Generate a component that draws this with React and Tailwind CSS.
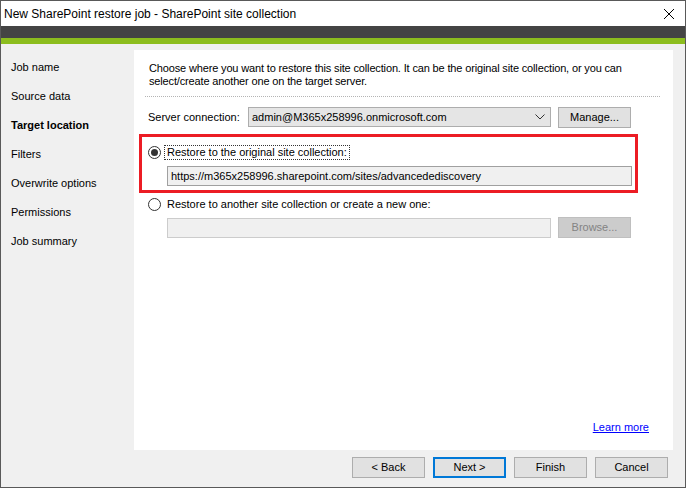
import React from 'react';

const navItems = ['Job name', 'Source data', 'Target location', 'Filters', 'Overwrite options', 'Permissions', 'Job summary'];

function Radio({ checked }) {
  return (
    <span className="w-[13px] h-[13px] rounded-full border border-[#333333] bg-white flex items-center justify-center shrink-0">
      {checked && <span className="w-[7px] h-[7px] rounded-full bg-[#333333]" />}
    </span>
  );
}

function Button({ children, primary, disabled, className = '' }) {
  return (
    <button
      className={
        'h-[21px] w-[73px] flex items-center justify-center ' +
        (primary
          ? 'border-2 border-[#0078d7] bg-[#e1e1e1] text-black '
          : disabled
          ? 'border border-[#bfbfbf] bg-[#cccccc] text-[#838383] '
          : 'border border-[#adadad] bg-[#e1e1e1] text-black ') +
        className
      }
    >
      {children}
    </button>
  );
}

export default function App() {
  return (
    <div
      className="w-[686px] h-[488px] border border-[#595959] flex flex-col bg-[#f0f0f0] text-[11px] text-black overflow-hidden"
      style={{ fontFamily: '"Liberation Sans", Arial, sans-serif' }}
    >
      {/* title bar */}
      <div className="h-[25px] bg-white flex items-center justify-between shrink-0">
        <span className="pl-[3px] text-[12px]">New SharePoint restore job - SharePoint site collection</span>
        <svg width="12" height="12" viewBox="0 0 12 12" className="mr-[10px]">
          <path d="M1 1 L11 11 M11 1 L1 11" stroke="#000" strokeWidth="1" fill="none" />
        </svg>
      </div>
      <div className="h-[12px] bg-[#444444] shrink-0" />
      <div className="h-[6px] bg-[#8cbd1e] shrink-0" />

      {/* body */}
      <div className="flex pt-[6px] pr-[12px] h-[406px]">
        <nav className="w-[133px] pt-[3px] pl-[10px]">
          {navItems.map((item) => (
            <div
              key={item}
              className={'h-[29px] flex items-center ' + (item === 'Target location' ? 'font-bold' : '')}
            >
              {item}
            </div>
          ))}
        </nav>

        <section className="flex-1 bg-white flex flex-col">
          <p className="pt-[12px] pl-[15px] w-[500px] leading-[13px] tracking-[-0.15px]">
            Choose where you want to restore this site collection. It can be the original site collection, or you can
            select/create another one on the target server.
          </p>
          <div className="mt-[8px] ml-[11px] mr-[13px] border-t border-dotted border-[#b4b4b4]" />

          <div className="mt-[10px] flex items-center h-[20px]">
            <span className="pl-[14px] w-[114px]">Server connection:</span>
            <div className="w-[303px] h-[20px] border border-[#adadad] bg-[#e5e5e5] flex items-center justify-between pl-[3px] pr-[5px]">
              <span>admin@M365x258996.onmicrosoft.com</span>
              <svg width="10" height="6" viewBox="0 0 10 6">
                <path d="M0.5 0.5 L5 5 L9.5 0.5" stroke="#333" strokeWidth="1" fill="none" />
              </svg>
            </div>
            <Button className="ml-[7px]">Manage...</Button>
          </div>

          <div className="mt-[7px] ml-[5px] w-[499px] h-[59px] border-[3px] border-[#ec1c24] flex flex-col">
            <div className="mt-[8px] ml-[6px] flex items-center h-[15px]">
              <Radio checked />
              <span className="ml-[3px] h-[15px] flex items-center px-[2px] border border-dotted border-[#333333]">
                Restore to the original site collection:
              </span>
            </div>
            <div className="mt-[6px] ml-[25px] w-[465px] h-[20px] border border-[#a0a0a0] bg-[#f0f0f0] flex items-center pl-[3px]">
              https://m365x258996.sharepoint.com/sites/advancedediscovery
            </div>
          </div>

          <div className="mt-[4px] ml-[14px] flex items-center h-[15px]">
            <Radio />
            <span className="ml-[6px]">Restore to another site collection or create a new one:</span>
          </div>
          <div className="mt-[5px] ml-[33px] flex items-center">
            <div className="w-[384px] h-[20px] border border-[#cccccc] bg-[#f0f0f0]" />
            <Button disabled className="ml-[7px]">Browse...</Button>
          </div>

          <div className="mt-auto pb-[15px] pr-[24px] flex justify-end">
            <a className="text-[#0000ff] underline cursor-pointer">Learn more</a>
          </div>
        </section>
      </div>

      {/* footer */}
      <div className="flex justify-end gap-[8px] pr-[17px] pt-[7px]">
        <Button>&lt; Back</Button>
        <Button primary>Next &gt;</Button>
        <Button>Finish</Button>
        <Button>Cancel</Button>
      </div>
    </div>
  );
}
